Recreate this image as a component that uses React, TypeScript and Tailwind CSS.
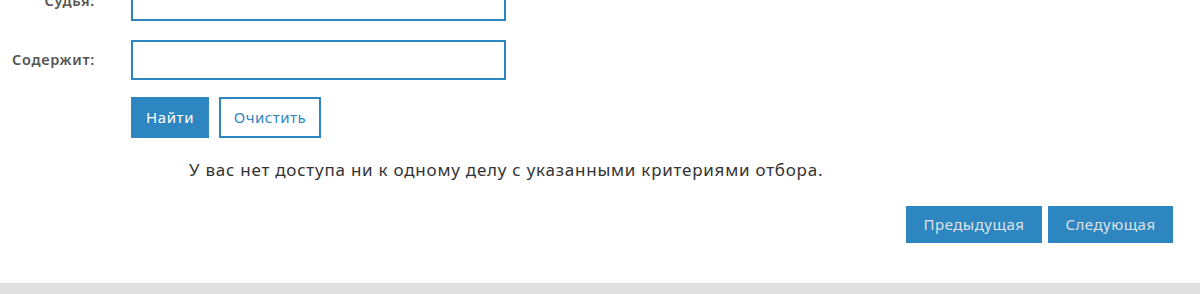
import React from "react";

export default function App() {
  const font = { fontFamily: '"Noto Sans", "Open Sans", sans-serif' };
  return (
    <div className="w-[1200px] h-[294px] overflow-hidden bg-white flex flex-col" style={font}>
      <div className="flex flex-col mt-[-19px]">
        <div className="flex items-center h-[40px]">
          <label className="w-[95px] text-right text-[14.5px] font-semibold tracking-[0.7px] text-[#555]">Судья:</label>
          <input className="ml-[36px] w-[375px] h-[40px] border-2 border-[#2e86c1] outline-none" />
        </div>
        <div className="flex items-center h-[40px] mt-[19px]">
          <label className="w-[95px] text-right text-[14.5px] font-semibold tracking-[0.7px] text-[#555]">Содержит:</label>
          <input className="ml-[36px] w-[375px] h-[40px] border-2 border-[#2e86c1] outline-none" />
        </div>
        <div className="flex gap-[10px] ml-[131px] mt-[17px]">
          <button className="w-[78px] h-[41px] bg-[#2e86c1] text-white text-[15px] tracking-[0.6px]">Найти</button>
          <button className="w-[102px] h-[41px] border-2 border-[#2e86c1] text-[#2e86c1] text-[15px] tracking-[0.5px] bg-white">Очистить</button>
        </div>
        <p className="ml-[189px] mt-[20px] text-[17px] tracking-[0.76px] text-[#333] leading-[24px]">
          У вас нет доступа ни к одному делу с указанными критериями отбора.
        </p>
        <div className="flex justify-end gap-[6px] pr-[27px] mt-[24px]">
          <button className="w-[136px] h-[37px] bg-[#2e86c1] text-[#dde3e8] text-[15px] tracking-[0.5px]">Предыдущая</button>
          <button className="w-[125px] h-[37px] bg-[#2e86c1] text-[#dde3e8] text-[15px] tracking-[0.5px]">Следующая</button>
        </div>
      </div>
      <div className="mt-auto h-[11px] bg-[#e0e0e0]" />
    </div>
  );
}
